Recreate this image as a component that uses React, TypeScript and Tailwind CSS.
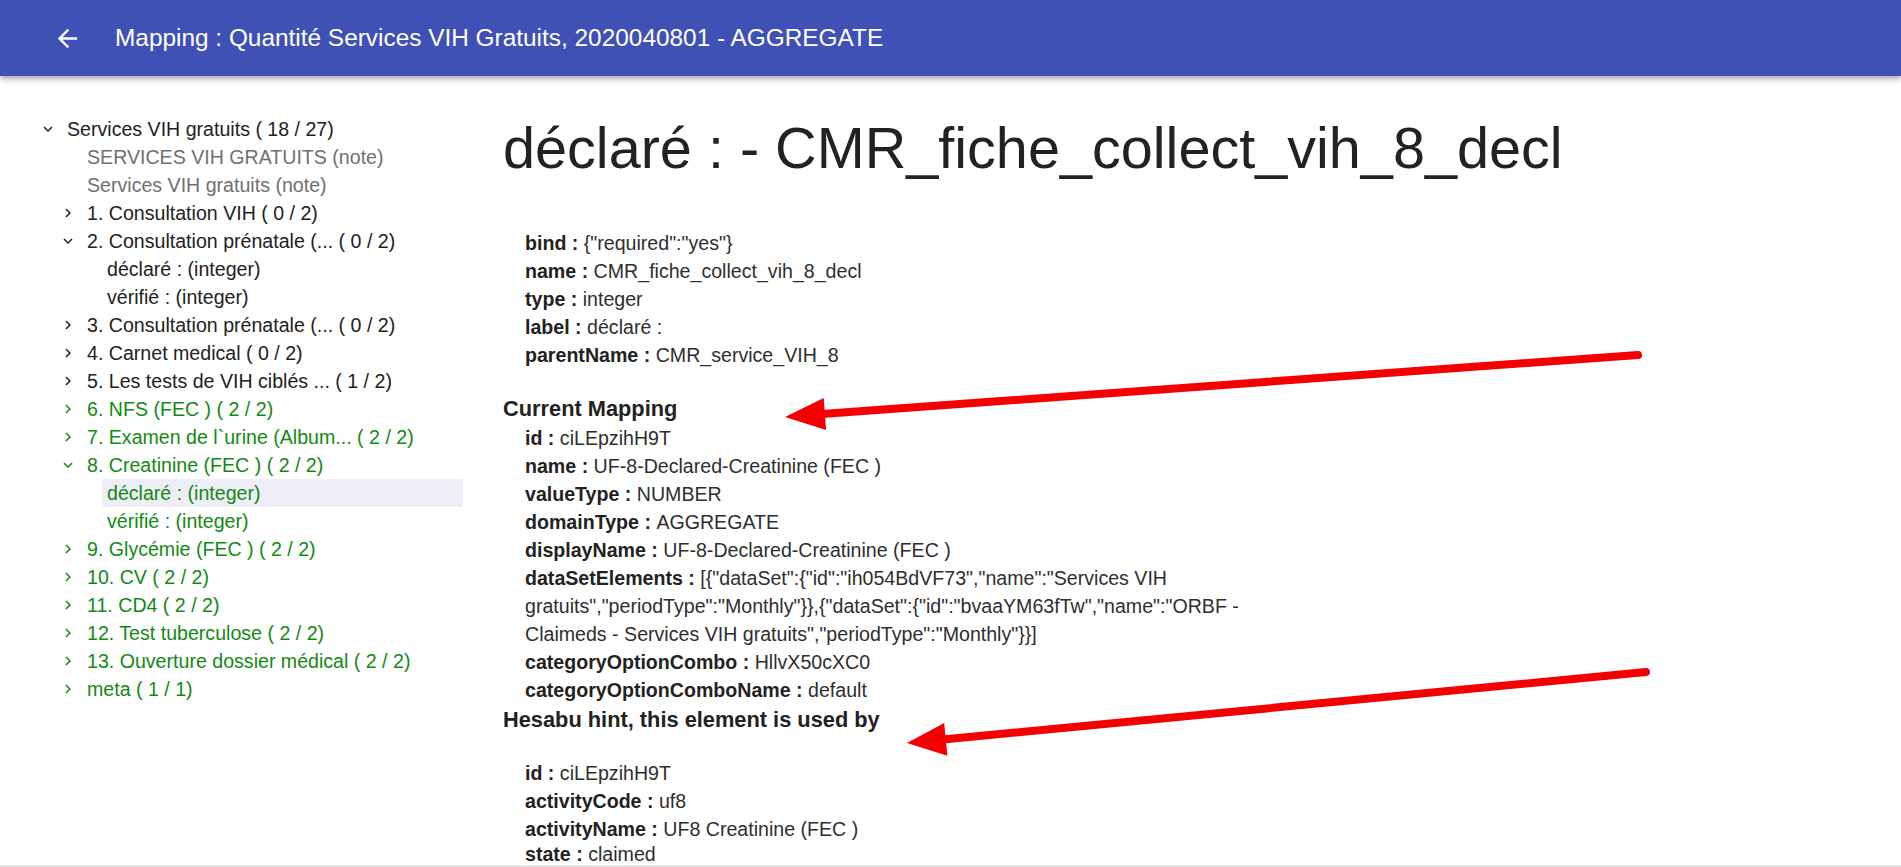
import React from "react";

type Row = {
  level: number;
  text: string;
  state: "open" | "closed" | "leaf";
  color: "black" | "gray" | "green";
  selected?: boolean;
};

const rows: Row[] = [
  { level: 0, text: "Services VIH gratuits ( 18 / 27)", state: "open", color: "black" },
  { level: 1, text: "SERVICES VIH GRATUITS (note)", state: "leaf", color: "gray" },
  { level: 1, text: "Services VIH gratuits (note)", state: "leaf", color: "gray" },
  { level: 1, text: "1. Consultation VIH ( 0 / 2)", state: "closed", color: "black" },
  { level: 1, text: "2. Consultation prénatale (... ( 0 / 2)", state: "open", color: "black" },
  { level: 2, text: "déclaré : (integer)", state: "leaf", color: "black" },
  { level: 2, text: "vérifié : (integer)", state: "leaf", color: "black" },
  { level: 1, text: "3. Consultation prénatale (... ( 0 / 2)", state: "closed", color: "black" },
  { level: 1, text: "4. Carnet medical ( 0 / 2)", state: "closed", color: "black" },
  { level: 1, text: "5. Les tests de VIH ciblés ... ( 1 / 2)", state: "closed", color: "black" },
  { level: 1, text: "6. NFS (FEC ) ( 2 / 2)", state: "closed", color: "green" },
  { level: 1, text: "7. Examen de l`urine (Album... ( 2 / 2)", state: "closed", color: "green" },
  { level: 1, text: "8. Creatinine (FEC ) ( 2 / 2)", state: "open", color: "green" },
  { level: 2, text: "déclaré : (integer)", state: "leaf", color: "green", selected: true },
  { level: 2, text: "vérifié : (integer)", state: "leaf", color: "green" },
  { level: 1, text: "9. Glycémie (FEC ) ( 2 / 2)", state: "closed", color: "green" },
  { level: 1, text: "10. CV ( 2 / 2)", state: "closed", color: "green" },
  { level: 1, text: "11. CD4 ( 2 / 2)", state: "closed", color: "green" },
  { level: 1, text: "12. Test tuberculose ( 2 / 2)", state: "closed", color: "green" },
  { level: 1, text: "13. Ouverture dossier médical ( 2 / 2)", state: "closed", color: "green" },
  { level: 1, text: "meta ( 1 / 1)", state: "closed", color: "green" },
];

const colorClass = {
  black: "text-[#222222]",
  gray: "text-[#707070]",
  green: "text-[#128a12]",
};

const padClass = ["pl-[39px]", "pl-[59px]", "pl-[79px]"];

function Chevron({ state }: { state: Row["state"] }) {
  if (state === "leaf") return <span className="w-[18px] h-[18px] shrink-0" />;
  return (
    <svg viewBox="0 0 24 24" className="w-[18px] h-[18px] shrink-0" fill="currentColor">
      {state === "open" ? (
        <path d="M16.59 8.59L12 13.17 7.41 8.59 6 10l6 6 6-6z" />
      ) : (
        <path d="M10 6L8.59 7.41 13.17 12l-4.58 4.59L10 18l6-6z" />
      )}
    </svg>
  );
}

function TreeRow({ row }: { row: Row }) {
  return (
    <div className={`flex items-center h-[28px] ${padClass[row.level]} ${colorClass[row.color]}`}>
      <Chevron state={row.state} />
      <div
        className={`flex-1 h-[28px] leading-[28px] pl-[5px] ml-[5px] whitespace-nowrap ${
          row.selected ? "bg-[#edeef6]" : ""
        }`}
      >
        {row.text}
      </div>
    </div>
  );
}

function Prop({
  k,
  v,
  extra,
  last,
}: {
  k: string;
  v: string;
  extra?: string[];
  last?: boolean;
}) {
  return (
    <>
      <div
        className={
          last
            ? "mt-[1px] h-[20px] leading-[20px] whitespace-nowrap"
            : "h-[28px] leading-[28px] whitespace-nowrap"
        }
      >
        <span className="font-bold text-[#222222]">{k} : </span>
        <span className="text-[#2e2e2e]">{v}</span>
      </div>
      {extra?.map((line, i) => (
        <div key={i} className="h-[28px] leading-[28px] whitespace-nowrap text-[#2e2e2e]">
          {line}
        </div>
      ))}
    </>
  );
}

export default function App() {
  return (
    <div
      className="relative w-[1901px] h-[867px] overflow-hidden bg-white flex flex-col"
      style={{ fontFamily: "'Liberation Sans', Arial, Helvetica, sans-serif" }}
    >
      <header className="relative z-10 h-[76px] shrink-0 bg-[#3f51b5] text-white flex items-center pl-[53px] shadow-[0px_2px_4px_-1px_rgba(0,0,0,0.2),0px_4px_5px_0px_rgba(0,0,0,0.14),0px_1px_10px_0px_rgba(0,0,0,0.12)]">
        <svg viewBox="0 0 24 24" className="w-[29px] h-[29px]" fill="currentColor">
          <path d="M20 11H7.83l5.59-5.59L12 4l-8 8 8 8 1.41-1.41L7.83 13H20v-2z" />
        </svg>
        <h1 className="ml-[33px] text-[24.4px] leading-[32px] font-normal whitespace-nowrap">
          Mapping : Quantité Services VIH Gratuits, 2020040801 - AGGREGATE
        </h1>
      </header>

      <div className="flex flex-1 min-h-0">
        <aside className="w-[463px] shrink-0 pt-[39px] text-[19.6px]">
          {rows.map((r, i) => (
            <TreeRow key={i} row={r} />
          ))}
        </aside>

        <main className="flex-1 min-w-0 pl-[40px] pt-[39px] text-[19.6px]">
          <h2 className="text-[57.6px] leading-[67px] font-normal text-[#222222] whitespace-nowrap">
            déclaré : - CMR_fiche_collect_vih_8_decl
          </h2>

          <div className="mt-[47px] pl-[22px]">
            <Prop k="bind" v={'{"required":"yes"}'} />
            <Prop k="name" v="CMR_fiche_collect_vih_8_decl" />
            <Prop k="type" v="integer" />
            <Prop k="label" v="déclaré :" />
            <Prop k="parentName" v="CMR_service_VIH_8" />
          </div>

          <h3 className="mt-[24px] h-[31px] leading-[31px] text-[21.8px] font-bold text-[#222222]">
            Current Mapping
          </h3>
          <div className="pl-[22px]">
            <Prop k="id" v="ciLEpzihH9T" />
            <Prop k="name" v="UF-8-Declared-Creatinine (FEC )" />
            <Prop k="valueType" v="NUMBER" />
            <Prop k="domainType" v="AGGREGATE" />
            <Prop k="displayName" v="UF-8-Declared-Creatinine (FEC )" />
            <Prop
              k="dataSetElements"
              v={'[{"dataSet":{"id":"ih054BdVF73","name":"Services VIH'}
              extra={[
                'gratuits","periodType":"Monthly"}},{"dataSet":{"id":"bvaaYM63fTw","name":"ORBF -',
                'Claimeds - Services VIH gratuits","periodType":"Monthly"}}]',
              ]}
            />
            <Prop k="categoryOptionCombo" v="HllvX50cXC0" />
            <Prop k="categoryOptionComboName" v="default" />
          </div>

          <h3 className="h-[31px] leading-[31px] text-[21.8px] font-bold text-[#222222]">
            Hesabu hint, this element is used by
          </h3>
          <div className="mt-[24px] pl-[22px]">
            <Prop k="id" v="ciLEpzihH9T" />
            <Prop k="activityCode" v="uf8" />
            <Prop k="activityName" v="UF8 Creatinine (FEC )" />
            <Prop k="state" v="claimed" last />
          </div>
        </main>
      </div>

      <div className="h-[2px] shrink-0 bg-[#e9e9e9]" />

      <svg
        className="absolute inset-0 pointer-events-none z-20"
        width="1901"
        height="867"
        viewBox="0 0 1901 867"
      >
        <line x1="1638" y1="355" x2="822" y2="414" stroke="#f50000" strokeWidth="8" strokeLinecap="round" />
        <polygon points="785,417 823.7,398.1 826.1,430.1" fill="#f50000" />
        <line x1="1646" y1="672" x2="943" y2="739.5" stroke="#f50000" strokeWidth="8" strokeLinecap="round" />
        <polygon points="907,743 944.2,722.9 947.4,755.7" fill="#f50000" />
      </svg>
    </div>
  );
}
